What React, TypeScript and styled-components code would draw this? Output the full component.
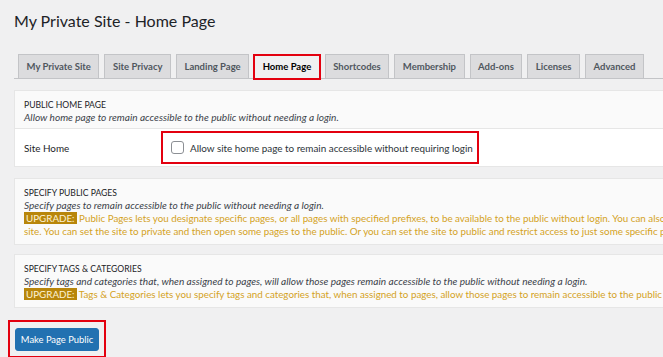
import React from "react";
import styled, { createGlobalStyle } from "styled-components";

const Global = createGlobalStyle`
  html, body { margin: 0; padding: 0; background: #f0f0f1; overflow: hidden; }
  body { font-family: Lato, "Open Sans", sans-serif; color: #1d2327; }
  * { box-sizing: border-box; }
`;

const Page = styled.div`
  width: 720px;
  padding: 6px 0 0 14px;
`;

const Title = styled.h1`
  margin: 0;
  font-size: 16px;
  font-weight: 400;
  line-height: 29px;
  color: #1d2327;
`;

const TabBar = styled.nav`
  display: flex;
  gap: 5px;
  margin-top: 19px;
  padding-left: 4px;
  border-bottom: 1px solid #c3c4c7;
  height: 25px;
`;

const Tab = styled.span<{ $active?: boolean }>`
  position: relative;
  display: flex;
  align-items: center;
  height: 25px;
  padding: 0 7.5px;
  font-size: 9.5px;
  font-weight: 700;
  white-space: nowrap;
  color: ${(p) => (p.$active ? "#000" : "#50575e")};
  background: ${(p) => (p.$active ? "#f0f0f1" : "#dcdcde")};
  border: 1px solid #c3c4c7;
  border-bottom-color: ${(p) => (p.$active ? "#f0f0f1" : "#c3c4c7")};
  ${(p) =>
    p.$active &&
    `&::after { content: ""; position: absolute; left: -2px; right: -2px; top: -1px; bottom: -2px; border: 2px solid #e3000f; }`}
`;

const Card = styled.section<{ $top: number }>`
  margin-top: ${(p) => p.$top}px;
  background: #fafafa;
  border: 1px solid #e6e6e6;
`;

const CardHead = styled.div<{ $pad: number }>`
  padding: 8px 10px ${(p) => p.$pad}px 9px;
`;

const Heading = styled.div`
  font-size: 8.6px;
  font-weight: 400;
  line-height: 12px;
  text-transform: uppercase;
  color: #1d2327;
`;

const Desc = styled.div`
  font-size: 10.1px;
  font-style: italic;
  line-height: 13px;
  color: #3c434a;
  white-space: nowrap;
`;

const Upgrade = styled.div`
  font-size: 9.8px;
  line-height: 13px;
  color: #d4a21e;
  white-space: nowrap;
`;

const Badge = styled.span`
  background: #b8860b;
  color: #fdf3d6;
  padding: 0 2px;
`;

const Row = styled.div`
  display: flex;
  align-items: center;
  height: 38px;
  background: #fff;
  border-top: 1px solid #e6e6e6;
`;

const RowLabel = styled.div`
  width: 146px;
  padding-left: 9px;
  font-size: 9.9px;
  color: #1d2327;
`;

const CheckWrap = styled.label`
  display: flex;
  align-items: center;
  gap: 6px;
  width: 318px;
  height: 33px;
  padding-left: 8px;
  border: 2px solid #e3000f;
  font-size: 9.9px;
  color: #2c3338;
  white-space: nowrap;
`;

const Box = styled.span`
  width: 13px;
  height: 13px;
  flex: none;
  border: 1px solid #8c8f94;
  border-radius: 3px;
  background: #fff;
`;

const Footer = styled.div`
  margin: 12px 0 0 -6px;
  width: 98px;
  height: 38px;
  border: 2px solid #e3000f;
  display: flex;
  align-items: center;
  justify-content: center;
`;

const Button = styled.button`
  width: 84px;
  height: 23px;
  border: 1px solid #2271b1;
  border-radius: 3px;
  background: #2271b1;
  color: #fff;
  font-family: inherit;
  font-size: 9.4px;
  white-space: nowrap;
  padding: 0;
`;

const tabs = ["My Private Site", "Site Privacy", "Landing Page", "Home Page", "Shortcodes", "Membership", "Add-ons", "Licenses", "Advanced"];

export default function App() {
  return (
    <>
      <Global />
      <Page>
        <Title>My Private Site - Home Page</Title>
        <TabBar>
          {tabs.map((t) => (
            <Tab key={t} $active={t === "Home Page"}>{t}</Tab>
          ))}
        </TabBar>
        <Card $top={11}>
          <CardHead $pad={4}>
            <Heading>Public Home Page</Heading>
            <Desc>Allow home page to remain accessible to the public without needing a login.</Desc>
          </CardHead>
          <Row>
            <RowLabel>Site Home</RowLabel>
            <CheckWrap>
              <Box />
              Allow site home page to remain accessible without requiring login
            </CheckWrap>
          </Row>
        </Card>
        <Card $top={11}>
          <CardHead $pad={6}>
            <Heading>Specify Public Pages</Heading>
            <Desc>Specify pages to remain accessible to the public without needing a login.</Desc>
            <Upgrade>
              <Badge>UPGRADE:</Badge> Public Pages lets you designate specific pages, or all pages with specified prefixes, to be available to the public without login. You can also
            </Upgrade>
            <Upgrade>
              site. You can set the site to private and then open some pages to the public. Or you can set the site to public and restrict access to just some specific pages.
            </Upgrade>
          </CardHead>
        </Card>
        <Card $top={9}>
          <CardHead $pad={6}>
            <Heading>Specify Tags &amp; Categories</Heading>
            <Desc>Specify tags and categories that, when assigned to pages, will allow those pages remain accessible to the public without needing a login.</Desc>
            <Upgrade>
              <Badge>UPGRADE:</Badge> Tags &amp; Categories lets you specify tags and categories that, when assigned to pages, allow those pages to remain accessible to the public without login.
            </Upgrade>
          </CardHead>
        </Card>
        <Footer>
          <Button>Make Page Public</Button>
        </Footer>
      </Page>
    </>
  );
}
